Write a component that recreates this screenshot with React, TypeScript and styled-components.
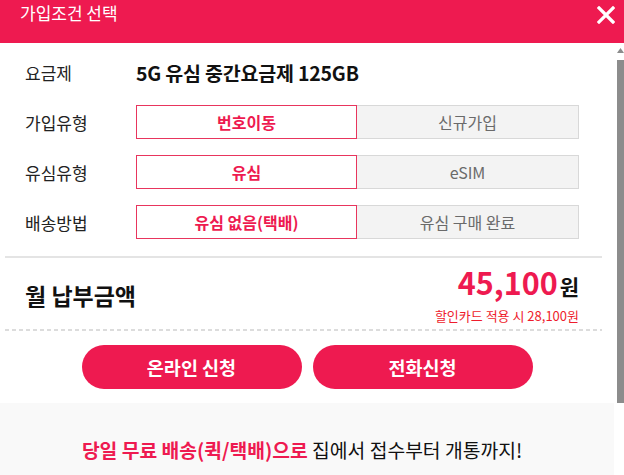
import React from "react";
import styled, { createGlobalStyle } from "styled-components";

const RED = "#ee1a50";

const Global = createGlobalStyle`
  html, body { margin: 0; padding: 0; overflow: hidden; background: #fff; }
  body { font-family: "Noto Sans CJK KR", "Noto Sans", sans-serif; }
  * { box-sizing: border-box; }
`;

const Page = styled.div`
  width: 624px;
  height: 475px;
  display: flex;
  flex-direction: column;
`;

const Header = styled.header`
  flex: 0 0 43px;
  background: ${RED};
  display: flex;
  justify-content: space-between;
  align-items: flex-start;
  padding: 0 9px 0 20px;
`;

const Title = styled.h1`
  margin: 0;
  font-size: 17px;
  line-height: 26px;
  font-weight: 400;
  color: #fff;
`;

const Close = styled.button`
  margin-top: 6px;
  width: 18px;
  height: 18px;
  padding: 0;
  border: 0;
  background: none;
  display: block;
`;

const Body = styled.div`
  flex: 0 0 432px;
  display: flex;
  align-items: stretch;
  overflow: hidden;
`;

const Content = styled.div`
  flex: 0 0 614px;
  width: 614px;
`;

/* drawn scrollbar: up arrow + thumb */
const Rail = styled.div`
  flex: 0 0 10px;
  width: 10px;
  display: flex;
  flex-direction: column;
  align-items: flex-end;
  background:
    linear-gradient(#8c8c8c, #8c8c8c) right 0 top 17px / 7px 343px no-repeat,
    #fff;
`;

const RailArrow = styled.svg`
  display: block;
  margin-top: 5px;
`;

const Form = styled.div`
  display: grid;
  grid-template-columns: 111px 1fr;
  grid-auto-rows: 34px;
  row-gap: 16px;
  padding: 12px 35px 0 25px;
`;

const Label = styled.div`
  display: flex;
  align-items: center;
  font-size: 17px;
  color: #222;
`;

const PlanName = styled.div`
  display: flex;
  align-items: center;
  font-size: 19.5px;
  font-weight: 700;
  color: #111;
  letter-spacing: -0.2px;
`;

const Toggle = styled.div`
  display: grid;
  grid-template-columns: 221px 1fr;
`;

const Option = styled.button<{ $active?: boolean }>`
  font-family: inherit;
  font-size: 16px;
  padding: 0;
  margin: 0;
  cursor: pointer;
  background: ${(p) => (p.$active ? "#fff" : "#f3f3f3")};
  color: ${(p) => (p.$active ? RED : "#6a6a6a")};
  font-weight: ${(p) => (p.$active ? 700 : 400)};
  border: 1px solid ${(p) => (p.$active ? "#e8355d" : "#d8d8d8")};
  border-left: ${(p) => (p.$active ? "1px solid #e8355d" : "0")};
`;

const Divider = styled.hr`
  margin: 17px 12px 0 5px;
  border: 0;
  height: 2px;
  background: #e4e4e4;
`;

const PriceRow = styled.div`
  display: flex;
  justify-content: space-between;
  align-items: center;
  padding: 6px 35px 4px 25px;
`;

const PriceLabel = styled.div`
  font-size: 23px;
  font-weight: 700;
  color: #111;
`;

const PriceBox = styled.div`
  display: flex;
  flex-direction: column;
  align-items: flex-end;
`;

const PriceLine = styled.div`
  line-height: 36px;
  font-weight: 700;
`;

const Amount = styled.span`
  font-size: 30.5px;
  color: ${RED};
`;

const Won = styled.span`
  font-size: 21px;
  color: #111;
  margin-left: 2px;
`;

const Discount = styled.div`
  margin-top: 1px;
  font-size: 13px;
  line-height: 18px;
  color: #ee1c2c;
`;

const Dotted = styled.div`
  margin: 0 12px 0 5px;
  height: 2px;
  background: repeating-linear-gradient(to right, #dcdcdc 0 4px, transparent 4px 7px);
`;

const Actions = styled.div`
  display: flex;
  justify-content: center;
  gap: 11px;
  margin-top: 14px;
`;

const Action = styled.button`
  width: 220px;
  height: 44px;
  border: 0;
  border-radius: 22px;
  background: ${RED};
  color: #fff;
  font-family: inherit;
  font-size: 18.5px;
  font-weight: 700;
  cursor: pointer;
`;

const Promo = styled.div`
  margin-top: 14px;
  height: 162px;
  background: #f9f9f9;
  padding: 34px 10px 0 0;
  text-align: center;
  font-size: 19.3px;
  line-height: 26px;
  color: #111;
`;

const PromoStrong = styled.strong`
  color: ${RED};
  font-weight: 700;
`;

function Row({ label, options }: { label: string; options: string[] }) {
  return (
    <>
      <Label>{label}</Label>
      <Toggle>
        {options.map((o, i) => (
          <Option key={o} $active={i === 0}>
            {o}
          </Option>
        ))}
      </Toggle>
    </>
  );
}

export default function App() {
  return (
    <Page>
      <Global />
      <Header>
        <Title>가입조건 선택</Title>
        <Close aria-label="닫기">
          <svg width="18" height="18" viewBox="0 0 18 18">
            <path d="M2 2 L16 16 M16 2 L2 16" stroke="#fff" strokeWidth="3.2" strokeLinecap="square" />
          </svg>
        </Close>
      </Header>
      <Body>
        <Content>
          <Form>
            <Label>요금제</Label>
            <PlanName>5G 유심 중간요금제 125GB</PlanName>
            <Row label="가입유형" options={["번호이동", "신규가입"]} />
            <Row label="유심유형" options={["유심", "eSIM"]} />
            <Row label="배송방법" options={["유심 없음(택배)", "유심 구매 완료"]} />
          </Form>
          <Divider />
          <PriceRow>
            <PriceLabel>월 납부금액</PriceLabel>
            <PriceBox>
              <PriceLine>
                <Amount>45,100</Amount>
                <Won>원</Won>
              </PriceLine>
              <Discount>할인카드 적용 시 28,100원</Discount>
            </PriceBox>
          </PriceRow>
          <Dotted />
          <Actions>
            <Action>온라인 신청</Action>
            <Action>전화신청</Action>
          </Actions>
          <Promo>
            <PromoStrong>당일 무료 배송(퀵/택배)으로</PromoStrong> 집에서 접수부터 개통까지!
          </Promo>
        </Content>
        <Rail>
          <RailArrow width="7" height="5" viewBox="0 0 7 5">
            <path d="M3.5 0 L7 5 L0 5 Z" fill="#8c8c8c" />
          </RailArrow>
        </Rail>
      </Body>
    </Page>
  );
}
